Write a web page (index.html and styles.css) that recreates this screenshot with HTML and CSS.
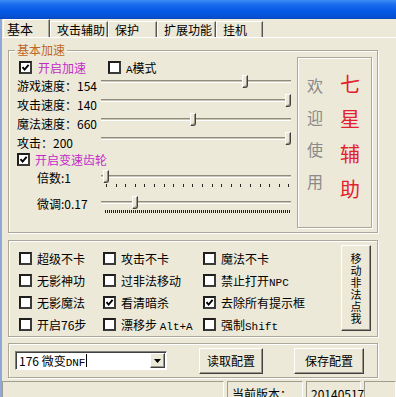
FILE: index.html
```html
<!DOCTYPE html>
<html lang="zh">
  <head>
    <meta charset="UTF-8" />
    <meta name="viewport" content="width=device-width, initial-scale=1.0" />
    <title>七星辅助</title>
    <link rel="stylesheet" href="styles.css">
  </head>

  <body>
    <div class="titlebar"></div>
    <div class="win">
      <!-- tab strip -->
      <div class="tabs">
        <div class="tab cur">基本</div>
        <div class="tab t2">攻击辅助</div>
        <div class="tab t3">保护</div>
        <div class="tab t4">扩展功能</div>
        <div class="tab t5">挂机</div>
      </div>

      <div class="page">
        <!-- 基本加速 -->
        <div class="grp speed">
          <div class="legend">基本加速</div>
          <div class="speed-body">
            <div class="ctl">
              <div class="top-row">
                <div class="chk first">
                  <span class="cb"><svg viewBox="0 0 9 9"><path d="M1.5 4.2 L3.6 6.6 L7.6 1.8" /></svg></span>
                  <span class="pink">开启加速</span>
                </div>
                <div class="chk">
                  <span class="cb"></span>
                  <span><span class="en">A</span>模式</span>
                </div>
              </div>

              <div class="srow">
                <span class="lbl">游戏速度：154</span>
                <div class="slider"><i class="thumb" style="left:141px"></i></div>
              </div>
              <div class="srow">
                <span class="lbl">攻击速度：140</span>
                <div class="slider"><i class="thumb" style="left:184px"></i></div>
              </div>
              <div class="srow">
                <span class="lbl">魔法速度：660</span>
                <div class="slider"><i class="thumb" style="left:89px"></i></div>
              </div>
              <div class="srow">
                <span class="lbl">攻击：200</span>
                <div class="slider"><i class="thumb" style="left:184px"></i></div>
              </div>

              <div class="chk gear">
                <span class="cb"><svg viewBox="0 0 9 9"><path d="M1.5 4.2 L3.6 6.6 L7.6 1.8" /></svg></span>
                <span class="pink">开启变速齿轮</span>
              </div>

              <div class="grow">
                <span class="lbl2">倍数:1</span>
                <div class="slider coarse"><i class="thumb" style="left:2px"></i></div>
              </div>
              <div class="grow">
                <span class="lbl2">微调:0.17</span>
                <div class="slider fine"><i class="thumb" style="left:31px"></i></div>
              </div>
            </div>

            <div class="welcome">
              <div class="grey">欢迎使用</div>
              <div class="red">七星辅助</div>
            </div>
          </div>
        </div>

        <!-- options -->
        <div class="grp opts">
          <div class="grid">
            <div class="chk"><span class="cb"></span>超级不卡</div>
            <div class="chk"><span class="cb"></span>攻击不卡</div>
            <div class="chk"><span class="cb"></span>魔法不卡</div>

            <div class="chk"><span class="cb"></span>无影神功</div>
            <div class="chk"><span class="cb"></span>过非法移动</div>
            <div class="chk"><span class="cb"></span><span>禁止打开<span class="en">NPC</span></span></div>

            <div class="chk"><span class="cb"></span>无影魔法</div>
            <div class="chk"><span class="cb"><svg viewBox="0 0 9 9"><path d="M1.5 4.2 L3.6 6.6 L7.6 1.8" /></svg></span>看清暗杀</div>
            <div class="chk"><span class="cb"><svg viewBox="0 0 9 9"><path d="M1.5 4.2 L3.6 6.6 L7.6 1.8" /></svg></span>去除所有提示框</div>

            <div class="chk"><span class="cb"></span>开启76步</div>
            <div class="chk"><span class="cb"></span><span>漂移步 <span class="en">Alt+A</span></span></div>
            <div class="chk"><span class="cb"></span><span>强制<span class="en">Shift</span></span></div>
          </div>
          <div class="vbtn"><span class="vtext">移动非法点我</span></div>
        </div>

        <!-- config -->
        <div class="grp cfg">
          <div class="combo">
            <span class="val">176 微变<span class="en">DNF</span></span><span class="caret"></span>
            <span class="drop"><svg viewBox="0 0 7 4"><path d="M0 0 H7 L3.5 4 Z" /></svg></span>
          </div>
          <div class="btn b1">读取配置</div>
          <div class="btn b2">保存配置</div>
        </div>
      </div>

      <div class="status">
        <div class="pane p1"></div>
        <div class="pane p2">当前版本：</div>
        <div class="pane p3">20140517</div>
        <div class="pane p4"></div>
      </div>
    </div>
  </body>
</html>
```

FILE: styles.css
```css
* {
  box-sizing: border-box;
}
body {
  margin: 0;
  width: 396px;
  height: 397px;
  overflow: hidden;
  background: #ece9d8;
  color: #000;
  font: 12px "Noto Sans CJK SC", "DejaVu Sans", sans-serif;
}
.en {
  font-family: "Liberation Mono", monospace;
  font-size: 11px;
}

.titlebar {
  height: 19px;
  background: linear-gradient(#3d8cf4 0%, #1a6bec 25%, #0458e4 60%, #0650d4 90%, #0a47b8 100%);
}
.win {
  border-left: 2px solid #8ea8dc;
}

/* tabs */
.tabs {
  display: flex;
  align-items: flex-end;
  height: 18px;
  padding-left: 1px;
}
.tab {
  height: 16px;
  line-height: 15px;
  padding-left: 6px;
  font-size: 12px;
  white-space: nowrap;
  border-left: 1px solid #fff;
  border-top: 1px solid #fff;
  border-right: 1px solid #555;
  box-shadow: inset -1px 0 #a8a596;
}
.tab.cur {
  width: 47px;
  height: 18px;
  line-height: 17px;
  padding-left: 3px;
  font-size: 13px;
}
.t2 { width: 58px; }
.t3 { width: 49px; }
.t4 { width: 59px; }
.t5 { width: 47px; }

.page {
  border-top: 1px solid #fff;
  padding-left: 6px;
}

/* group boxes */
.grp {
  width: 370px;
  border: 1px solid #aca899;
  box-shadow: inset 1px 1px #fff, 1px 1px #fff;
}
.legend {
  width: max-content;
  height: 14px;
  line-height: 14px;
  margin: -8px 0 0 6px;
  padding: 0 2px;
  background: #ece9d8;
  color: #c0661e;
}
.speed {
  margin-top: 12px;
  height: 183px;
}
.speed-body {
  display: flex;
  padding-left: 8px;
}
.ctl {
  width: 280px;
}
.top-row {
  display: flex;
  height: 16px;
  margin-top: 2px;
  padding-left: 2px;
}
.chk {
  display: flex;
  align-items: center;
  gap: 5px;
  white-space: nowrap;
}
.chk.first {
  width: 89px;
  gap: 6px;
}
.pink {
  color: #c42cc8;
}
.cb {
  flex: none;
  width: 13px;
  height: 13px;
  border: 2px solid #1e1e1e;
  border-right-color: #3a3a3a;
  border-bottom-color: #3a3a3a;
  background: #fff;
  display: flex;
}
.cb svg {
  width: 9px;
  height: 9px;
}
.cb path {
  fill: none;
  stroke: #000;
  stroke-width: 1.9;
}

.srow {
  display: flex;
  height: 19px;
}
.srow:first-of-type {
  margin-top: 1px;
}
.lbl {
  width: 84px;
  line-height: 19px;
  padding-top: 1px;
}
.gear {
  height: 14px;
  margin-top: 1px;
}
.grow {
  display: flex;
  height: 26px;
  margin-top: 2px;
}
.grow + .grow {
  margin-top: 0;
}
.lbl2 {
  width: 84px;
  padding-left: 20px;
  line-height: 20px;
}

/* trackbar */
.slider {
  position: relative;
  flex: none;
  width: 190px;
  height: 13px;
  background: linear-gradient(#fff0 5px, #8f8c7e 5px, #8f8c7e 6px, #c9c6b8 6px, #c9c6b8 7px, #fff 7px, #fff 8px, #fff0 8px);
}
.grow .slider {
  height: 17px;
  margin-top: 2px;
}
.slider.coarse {
  background:
    linear-gradient(#fff0 5px, #8f8c7e 5px, #8f8c7e 6px, #c9c6b8 6px, #c9c6b8 7px, #fff 7px, #fff 8px, #fff0 8px),
    repeating-linear-gradient(90deg, #222 0 1px, #fff0 1px 9.6px) 5px 14px / 185px 3px no-repeat;
}
.slider.fine {
  background:
    linear-gradient(#fff0 5px, #8f8c7e 5px, #8f8c7e 6px, #c9c6b8 6px, #c9c6b8 7px, #fff 7px, #fff 8px, #fff0 8px),
    repeating-linear-gradient(90deg, #222 0 1px, #fff0 1px 2px) 4px 14px / 185px 3px no-repeat;
}
.thumb {
  position: absolute;
  top: 0;
  width: 6px;
  height: 13px;
  background: #ece9d8;
  border-left: 1px solid #fff;
  border-top: 1px solid #fff;
  border-right: 1px solid #404040;
  border-bottom: 1px solid #404040;
  border-bottom-right-radius: 3px;
  box-shadow: inset -1px -1px #9a978a;
}

.welcome {
  display: flex;
  width: 75px;
  height: 171px;
  padding-left: 7px;
  gap: 13px;
  border: 1px solid #aca899;
  box-shadow: inset 1px 1px #fff, 1px 1px #fff;
}
.grey {
  width: 20px;
  padding-top: 11px;
  font-size: 16px;
  line-height: 32px;
  text-align: center;
  color: #8a8a8a;
}
.red {
  width: 24px;
  padding-top: 8px;
  font-size: 20px;
  line-height: 35px;
  text-align: center;
  color: #e4202e;
}

/* options */
.opts {
  display: flex;
  height: 97px;
  margin-top: 7px;
}
.grid {
  display: grid;
  grid-template-columns: 84px 100px 138px;
  grid-auto-rows: 22px;
  padding: 6px 0 0 10px;
}
.vbtn {
  display: flex;
  justify-content: center;
  width: 30px;
  height: 86px;
  margin-top: 4px;
  padding-top: 6px;
  border: 1px solid;
  border-color: #fff #404040 #404040 #fff;
  box-shadow: inset -1px -1px #9a978a;
}
.vtext {
  width: 12px;
  font-size: 11px;
  line-height: 12px;
  text-align: center;
  word-break: break-all;
}

/* config row */
.cfg {
  display: flex;
  align-items: center;
  height: 35px;
  margin-top: 6px;
  padding-left: 6px;
}
.combo {
  display: flex;
  align-items: center;
  width: 152px;
  height: 19px;
  padding-left: 3px;
  background: #fff;
  border: 1px solid;
  border-color: #808080 #fff #fff #808080;
  box-shadow: inset 1px 1px #404040;
}
.val {
  white-space: nowrap;
}
.caret {
  width: 1px;
  height: 13px;
  margin-left: 1px;
  background: #000;
}
.drop {
  display: flex;
  align-items: center;
  justify-content: center;
  width: 15px;
  height: 15px;
  margin-left: auto;
  margin-right: 1px;
  background: #ece9d8;
  border: 1px solid;
  border-color: #fff #404040 #404040 #fff;
  box-shadow: inset -1px -1px #9a978a;
}
.drop svg {
  width: 7px;
  height: 4px;
}
.btn {
  height: 26px;
  line-height: 24px;
  text-align: center;
  border: 1px solid;
  border-color: #fff #404040 #404040 #fff;
  box-shadow: inset -1px -1px #9a978a;
}
.b1 {
  width: 64px;
  margin-left: 32px;
}
.b2 {
  width: 70px;
  margin-left: 31px;
}

/* status bar */
.status {
  display: flex;
  gap: 3px;
  margin-top: 3px;
  height: 20px;
}
.pane {
  padding: 3px 0 0 4px;
  white-space: nowrap;
  border-top: 1px solid #a09d90;
  border-left: 1px solid #a09d90;
  border-right: 1px solid #fff;
}
.p1 { width: 222px; }
.p2 { width: 76px; }
.p3 { width: 55px; }
.p4 { flex: 1; }
```
